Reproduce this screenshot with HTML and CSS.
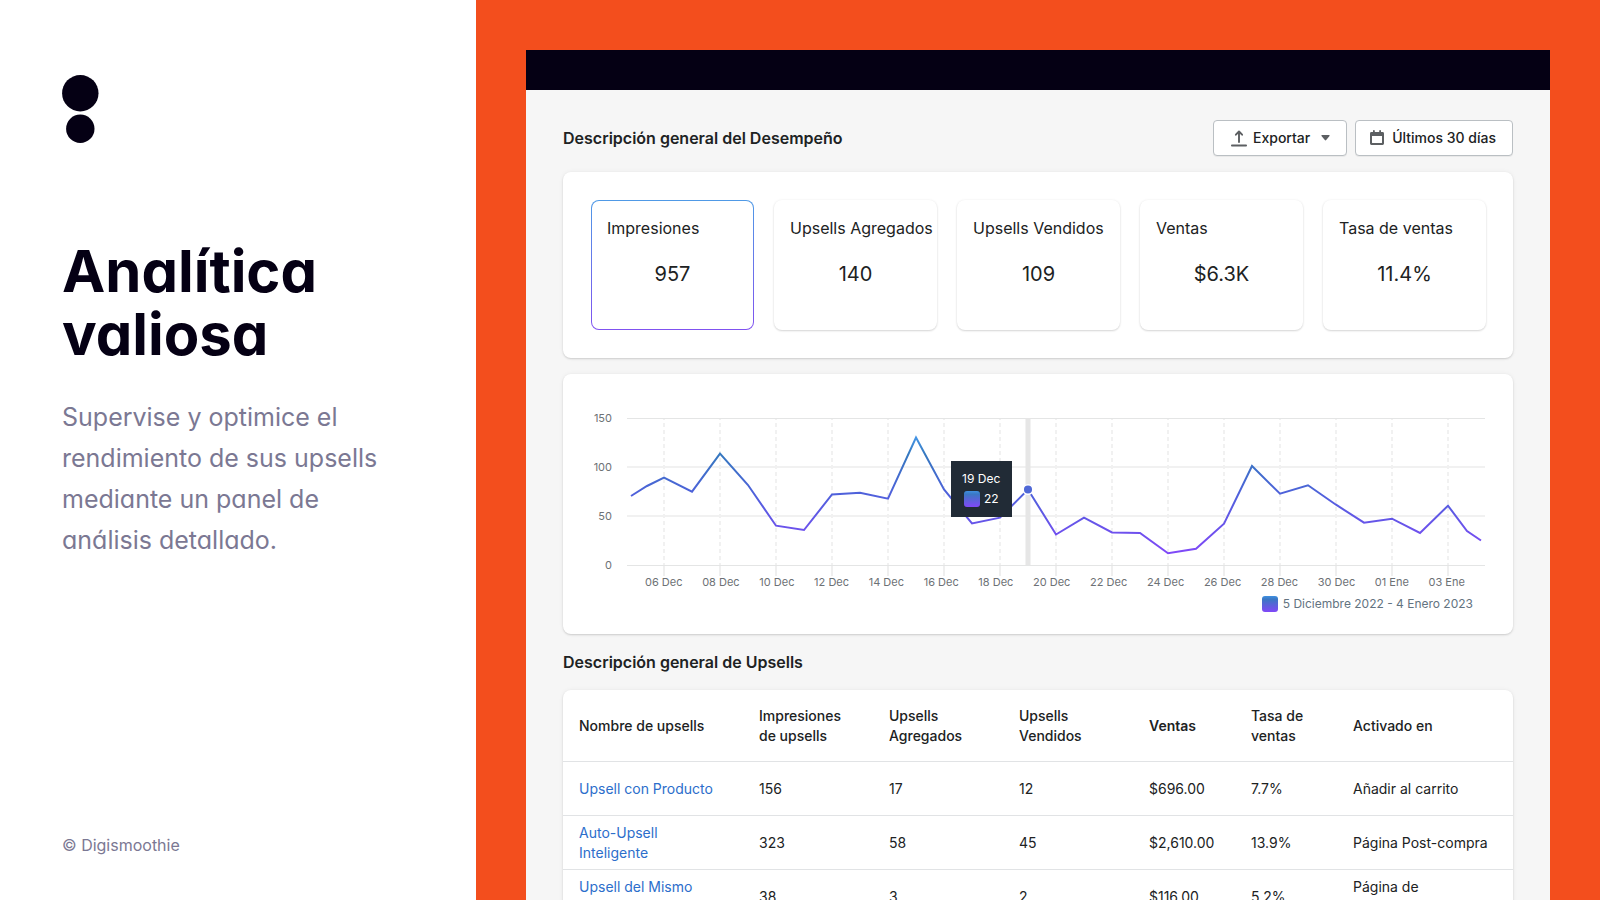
FILE: index.html
```html
<!DOCTYPE html>
<html lang="es">
<head>
<meta charset="utf-8">
<title>Analítica valiosa</title>
<meta name="viewport" content="width=device-width, initial-scale=1">
<link rel="stylesheet" href="styles.css">
</head>
<body>
<div class="slide">
  <aside class="intro">
    <svg class="logo" width="37" height="68" viewBox="0 0 37 68" aria-hidden="true">
      <circle cx="18.3" cy="18.2" r="18.2"/>
      <circle cx="18.3" cy="53.8" r="14.2"/>
    </svg>
    <h1 class="intro-title">Analítica<br>valiosa</h1>
    <p class="intro-text">Supervise y optimice el<br>rendimiento de sus upsells<br>mediante un panel de<br>análisis detallado.</p>
    <p class="intro-credit">© Digismoothie</p>
  </aside>
  <main class="stage">
    <div class="window">
      <div class="window-bar"></div>
      <div class="window-body">
        <header class="toolbar">
          <h2 class="section-title">Descripción general del Desempeño</h2>
          <div class="toolbar-actions">
            <button type="button" class="btn btn-export">
              <svg class="icon" width="16" height="17" viewBox="0 0 16 17" aria-hidden="true">
                <path d="M8 12V2M4.900 4.700 8 1.500 11.100 4.700" fill="none" stroke="currentColor" stroke-width="1.9" stroke-linecap="round" stroke-linejoin="round"/>
                <rect x="0" y="14.6" width="16" height="1.9" rx=".9"/>
              </svg>
              <span>Exportar</span>
              <svg class="icon caret" width="9" height="6" viewBox="0 0 9 6" aria-hidden="true"><path d="M1 0h7q1 0 .5.9L5.2 5q-.7.8-1.4 0L.5.9Q0 0 1 0z"/></svg>
            </button>
            <button type="button" class="btn btn-range">
              <svg class="icon" width="14" height="16" viewBox="0 0 14 16" aria-hidden="true">
                <path fill-rule="evenodd" d="M3 .8q0-.8.9-.8t.9.8V2h4.4V.8q0-.8.9-.8t.9.8V2H12.600q1.400 0 1.400 1.400v10.200q0 1.400-1.400 1.400H1.400Q0 15 0 13.600V3.400Q0 2 1.400 2H3zM2 6v6.400q0 .6.6.6h8.800q.6 0 .6-.6V6z"/>
              </svg>
              <span>Últimos 30 días</span>
            </button>
          </div>
        </header>

        <section class="card stats">
          <div class="stat stat-active"><span class="stat-label">Impresiones</span><span class="stat-value">957</span></div>
          <div class="stat"><span class="stat-label">Upsells Agregados</span><span class="stat-value">140</span></div>
          <div class="stat"><span class="stat-label">Upsells Vendidos</span><span class="stat-value">109</span></div>
          <div class="stat"><span class="stat-label">Ventas</span><span class="stat-value">$6.3K</span></div>
          <div class="stat"><span class="stat-label">Tasa de ventas</span><span class="stat-value">11.4%</span></div>
        </section>

        <section class="card chart">
          <div class="chart-main">
            <div class="axis-y"><span>150</span><span>100</span><span>50</span><span>0</span></div>
            <div class="plot">
              <svg class="plot-svg" viewBox="627 412 858 164" role="img" aria-label="Impresiones por día">
                <defs>
                  <linearGradient id="line" gradientUnits="userSpaceOnUse" x1="0" y1="437" x2="0" y2="554">
                    <stop offset="0" stop-color="#4696e6"/>
                    <stop offset=".15" stop-color="#3578bf"/>
                    <stop offset=".5" stop-color="#5060dc"/>
                    <stop offset="1" stop-color="#8048f8"/>
                  </linearGradient>
                </defs>
                <path class="grid-edge" d="M627 418.500H1485M627 565.500H1485"/>
                <path class="grid-mid" d="M627 467H1485M627 516H1485"/>
                <path class="grid-dash" d="M664 419V565M720 419V565M776 419V565M832 419V565M888 419V565M944 419V565M1000 419V565M1056 419V565M1112 419V565M1168 419V565M1224 419V565M1280 419V565M1336 419V565M1392 419V565M1448 419V565"/>
                <path class="grid-tick" d="M664 566V576M720 566V576M776 566V576M832 566V576M888 566V576M944 566V576M1000 566V576M1056 566V576M1112 566V576M1168 566V576M1224 566V576M1280 566V576M1336 566V576M1392 566V576M1448 566V576"/>
                <rect class="cursor" x="1025.500" y="418" width="5" height="147"/>
                <polyline class="series" points="631,496 647,486 664,477.700 692,491.700 720,453.700 748,485 776,525.700 804,530 832,494.500 860,492.700 888,498.700 916,437.500 944,489.500 972,523.500 1000,517.700 1028,489.500 1056,534.500 1084,517.700 1112,532.500 1140,533 1168,553.300 1196,548.700 1224,523.700 1252,466 1280,493.700 1308,485.300 1336,504.700 1364,522.700 1392,518.700 1420,533 1448,505.700 1467,531 1481,540.500"/>
                <circle class="marker" cx="1028" cy="489.500" r="4.800"/>
              </svg>
              <div class="tooltip">
                <span>19 Dec</span>
                <span class="tooltip-row"><i class="swatch"></i>22</span>
              </div>
            </div>
          </div>
          <div class="axis-x"><span>06 Dec</span><span>08 Dec</span><span>10 Dec</span><span>12 Dec</span><span>14 Dec</span><span>16 Dec</span><span>18 Dec</span><span>20 Dec</span><span>22 Dec</span><span>24 Dec</span><span>26 Dec</span><span>28 Dec</span><span>30 Dec</span><span>01 Ene</span><span>03 Ene</span></div>
          <div class="legend"><i class="swatch"></i><span>5 Diciembre 2022 - 4 Enero 2023</span></div>
        </section>

        <h2 class="section-title upsells-title">Descripción general de Upsells</h2>
        <section class="card table-card">
          <table class="upsells">
            <colgroup><col class="c-name"><col class="c-num"><col class="c-num"><col class="c-num"><col class="c-rate"><col class="c-rate"><col></colgroup>
            <thead>
              <tr><th>Nombre de upsells</th><th>Impresiones<br>de upsells</th><th>Upsells<br>Agregados</th><th>Upsells<br>Vendidos</th><th class="sorted">Ventas</th><th>Tasa de<br>ventas</th><th>Activado en</th></tr>
            </thead>
            <tbody>
              <tr><td><a href="#">Upsell con Producto</a></td><td>156</td><td>17</td><td>12</td><td>$696.00</td><td>7.7%</td><td>Añadir al carrito</td></tr>
              <tr><td><a href="#">Auto-Upsell<br>Inteligente</a></td><td>323</td><td>58</td><td>45</td><td>$2,610.00</td><td>13.9%</td><td>Página Post-compra</td></tr>
              <tr><td><a href="#">Upsell del Mismo<br>Producto</a></td><td>38</td><td>3</td><td>2</td><td>$116.00</td><td>5.2%</td><td>Página de<br>Producto</td></tr>
            </tbody>
          </table>
        </section>
      </div>
    </div>
  </main>
</div>
</body>
</html>
```
FILE: styles.css
```css
* { box-sizing: border-box; }
body { margin: 0; font-family: Inter, "Liberation Sans", sans-serif; color: #202223; }
h1, h2, p { margin: 0; }

.slide { display: flex; height: 100vh; overflow: hidden; }

.intro {
  flex: 0 0 476px;
  display: flex;
  flex-direction: column;
  padding: 75px 62px 45px;
  background: #fff;
  color: #7b7893;
  font-feature-settings: "cv11", "ss03";
}
.logo { display: block; fill: #050014; }
.intro-title { margin-top: 97px; font-size: 58px; line-height: 63px; font-weight: 700; color: #050014; white-space: nowrap; }
.intro-text { margin-top: 31px; font-size: 25px; line-height: 41px; white-space: nowrap; }
.intro-credit { margin-top: auto; font-size: 16px; line-height: 20px; }

.stage { flex: 1; min-width: 0; padding: 50px 50px 0; background: #f34e1d; overflow: hidden; }
.window { background: #f6f6f6; min-height: 100%; }
.window-bar { height: 40px; background: #050014; }
.window-body { padding: 30px 37px; }

.toolbar { display: flex; justify-content: space-between; align-items: center; }
.section-title { font-size: 16px; line-height: 24px; font-weight: 600; }
.toolbar-actions { display: flex; gap: 8px; }
.btn {
  display: flex;
  align-items: center;
  height: 36px;
  padding: 0 16px;
  border: 1px solid #babfc3;
  border-radius: 4px;
  background: #fff;
  box-shadow: 0 1px 0 rgba(0, 0, 0, .05);
  font: 500 14px/20px Inter, "Liberation Sans", sans-serif;
  color: #202223;
  white-space: nowrap;
}
.btn-export { gap: 6px; padding-left: 17px; }
.btn-range { gap: 8px; padding-left: 14px; }
.icon { display: block; fill: #5c5f62; color: #5c5f62; }
.caret { margin-left: 5px; }

.card { background: #fff; border-radius: 8px; box-shadow: 0 0 5px rgba(23, 24, 24, .05), 0 1px 2px rgba(0, 0, 0, .15); }
.stats { display: grid; grid-template-columns: repeat(5, minmax(0, 1fr)); gap: 20px; margin-top: 16px; padding: 28px 27px 28px 28px; }
.stat {
  display: flex;
  flex-direction: column;
  gap: 20px;
  height: 130px;
  padding: 16px;
  border-radius: 8px;
  background: #fff;
  box-shadow: 0 0 3px rgba(23, 24, 24, .05), 0 1px 2px rgba(0, 0, 0, .15);
  white-space: nowrap;
}
.stat-active {
  padding: 15px;
  border: 1px solid transparent;
  background: linear-gradient(#fff, #fff) padding-box, linear-gradient(#4f9ae6, #8052f0) border-box;
  box-shadow: none;
}
.stat-label { font-size: 16px; line-height: 24px; }
.stat-value { font-size: 20px; line-height: 28px; text-align: center; }

.chart { margin-top: 16px; padding: 38px 28px 22px; }
.chart-main { display: grid; grid-template-columns: 21px 1fr; gap: 15px; }
.axis-y { display: flex; flex-direction: column; justify-content: space-between; padding-bottom: 5px; text-align: right; }
.axis-y, .axis-x { font-size: 11px; line-height: 12px; color: #6d7175; }
.plot { position: relative; }
.plot-svg { display: block; width: 100%; height: auto; }
.grid-edge { stroke: #e4e5e5; }
.grid-mid { stroke: #f1f1f1; stroke-width: 2; }
.grid-dash { stroke: #f1f1f1; stroke-width: 2; stroke-dasharray: 4 3; stroke-dashoffset: 3; }
.grid-tick { stroke: #efefef; stroke-width: 2; }
.cursor { fill: #e6e6e6; }
.series { fill: none; stroke: url(#line); stroke-width: 2; }
.marker { fill: #4f68d6; stroke: #fff; stroke-width: 1.5; }
.tooltip {
  position: absolute;
  top: 30%;
  right: 55.1%;
  display: flex;
  flex-direction: column;
  gap: 2px;
  padding: 9px 12px 9px 11px;
  background: #212b36;
  color: #fff;
  font-size: 12px;
  line-height: 18px;
  white-space: nowrap;
}
.tooltip-row { display: flex; align-items: center; gap: 4px; padding-left: 2px; }
.swatch { width: 16px; height: 16px; border-radius: 3px; background: linear-gradient(#4090e0, #3a78c4 20%, #5f5fdc 60%, #8048f8); }
.axis-x { display: flex; justify-content: space-between; padding: 0 20px 0 54px; white-space: nowrap; }
.legend { display: flex; justify-content: flex-end; align-items: center; gap: 5px; margin-top: 8px; padding-right: 12px; font-size: 12px; line-height: 16px; color: #637381; }

.upsells-title { margin: 16px 0; }
.table-card { overflow: hidden; }
.upsells { width: 100%; border-collapse: collapse; table-layout: fixed; font-size: 14px; line-height: 20px; text-align: left; white-space: nowrap; }
.c-name { width: 180px; }
.c-num { width: 130px; }
.c-rate { width: 102px; }
.upsells th { height: 71px; padding: 2px 16px 0; border-bottom: 1px solid #e1e3e5; font-weight: 500; }
.upsells th.sorted { font-weight: 600; }
.upsells td { height: 54px; padding: 2px 16px 0; border-bottom: 1px solid #e1e3e5; }
.upsells a { color: #2c6ecb; text-decoration: none; }
```
